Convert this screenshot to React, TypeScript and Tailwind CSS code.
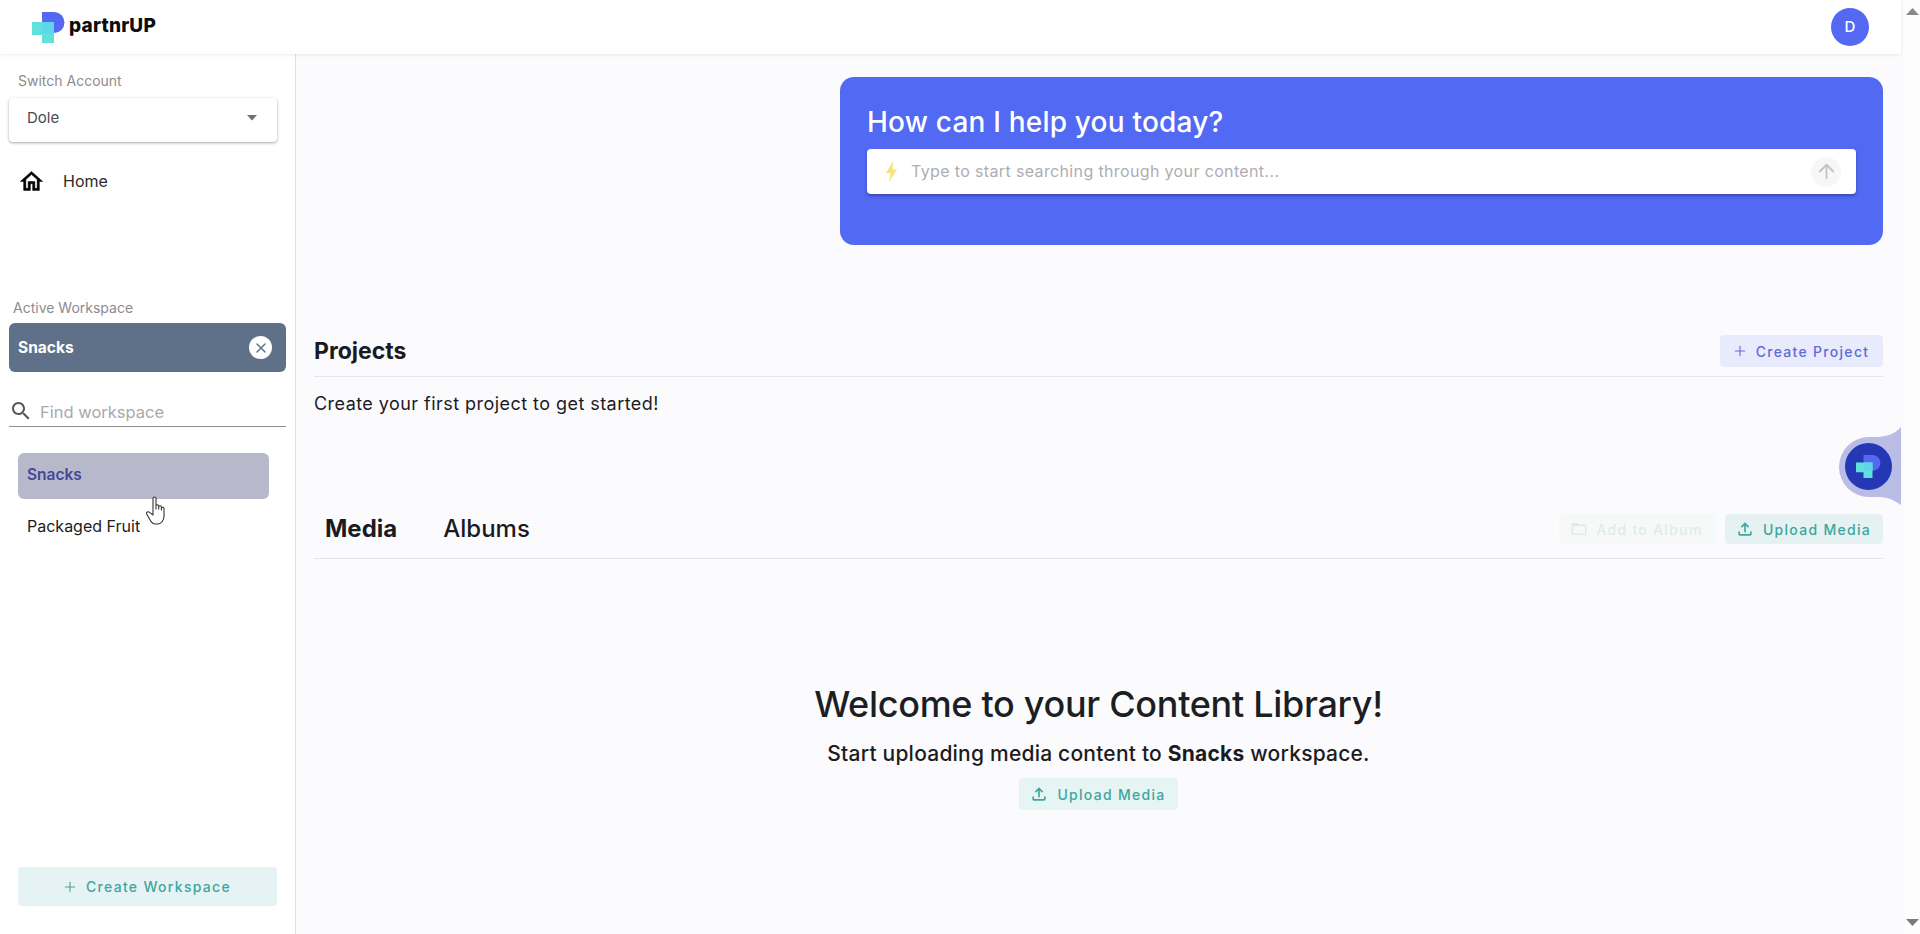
import React from "react";
import { Plus, ArrowUp, X } from "lucide-react";

function Logo({ s = 1 }: { s?: number }) {
  return (
    <svg width={33 * s} height={31 * s} viewBox="0 0 33 31">
      <path d="M10 0h12a10.5 10.5 0 0 1 10.5 10.5A10.5 10.5 0 0 1 22 21H10z" fill="#5468f4" />
      <path d="M10 10h12v21H10V23H0V10z" fill="#62e0da" />
      <path d="M10 10h12v11H10z" fill="#5cd6e8" />
    </svg>
  );
}

function UploadIcon() {
  return (
    <svg width="20" height="20" viewBox="0 0 24 24" fill="currentColor">
      <path d="M18 15v3H6v-3H4v3c0 1.1.9 2 2 2h12c1.1 0 2-.9 2-2v-3h-2zM7 9l1.41 1.41L11 7.83V16h2V7.83l2.59 2.58L17 9l-5-5-5 5z" />
    </svg>
  );
}

function FolderIcon() {
  return (
    <svg width="18" height="18" viewBox="0 0 24 24" fill="currentColor">
      <path d="M20 6h-8l-2-2H4c-1.1 0-1.99.9-1.99 2L2 18c0 1.1.9 2 2 2h16c1.1 0 2-.9 2-2V8c0-1.1-.9-2-2-2zm0 12H4V8h16v10z" />
    </svg>
  );
}

function ActionBtn({ icon, label, cls, w }: { icon: React.ReactNode; label: string; cls: string; w: string }) {
  return (
    <div className={`flex items-center justify-center gap-[8px] rounded-[4px] pr-[2px] text-[14px] font-medium tracking-[1.3px] ${cls} ${w}`}>
      {icon}
      <span>{label}</span>
    </div>
  );
}

export default function App() {
  return (
    <div className="relative h-[934px] w-[1920px] overflow-hidden bg-[#fbfbfe] text-[#1b1b1f] font-['Inter',sans-serif]">
      <header className="relative z-10 flex h-[54px] w-[1901px] items-center justify-between bg-white pl-[32px] pr-[32px] shadow-[0_1px_3px_rgba(0,0,0,0.08)]">
        <div className="flex items-center gap-[4px]">
          <Logo />
          <span className="-mt-[2px] text-[19px] font-extrabold tracking-[0.2px] text-[#0b0b10]">partnrUP</span>
        </div>
        <div className="flex h-[38px] w-[38px] items-center justify-center rounded-full bg-[#5468f4] text-[15px] font-medium text-white">D</div>
      </header>

      <div className="flex h-[880px] w-[1905px]">
        <aside className="flex h-full w-[296px] shrink-0 flex-col border-r border-[#dedfe3] bg-white">
          <div className="pl-[18px] pt-[19px] text-[14px] leading-[16px] text-[#8c8c90]">Switch Account</div>
          <div className="ml-[9px] mt-[9px] flex h-[44px] w-[268px] items-center justify-between rounded-[4px] bg-white pb-[4px] pl-[18px] pr-[20px] text-[15px] text-[#4a4a4e] shadow-[0_1px_3px_rgba(0,0,0,0.35)]">
            <span>Dole</span>
            <svg width="10" height="6" viewBox="0 0 10 6"><path d="M0 0h10L5 5.5z" fill="#6f6f73" /></svg>
          </div>
          <div className="mt-[24px] flex h-[30px] items-center pl-[18px] text-[16px] text-[#2a2a2e]">
            <svg width="27" height="27" viewBox="0 0 24 24" fill="#000" stroke="#000" strokeWidth="0.4">
              <path d="M12 5.69l5 4.5V18h-2v-6H9v6H7v-7.81l5-4.5M12 3L2 12h3v8h6v-6h2v6h6v-8h3L12 3z" />
            </svg>
            <span className="ml-[18px]">Home</span>
          </div>
          <div className="mt-[104px] pl-[13px] text-[14px] leading-[16px] text-[#8c8c90]">Active Workspace</div>
          <div className="ml-[9px] mt-[7px] flex h-[49px] w-[277px] items-center justify-between rounded-[6px] bg-[#5f7189] pl-[9px] pr-[14px]">
            <span className="mt-[1px] text-[15.5px] font-bold text-white">Snacks</span>
            <span className="flex h-[23px] w-[23px] items-center justify-center rounded-full bg-white">
              <X size={16} strokeWidth={2.2} className="text-[#5f7189]" />
            </span>
          </div>
          <div className="ml-[9px] mt-[26px] flex h-[29px] w-[277px] items-center border-b border-[#8f8f93] text-[16.5px] text-[#a9a9ad]">
            <svg width="24" height="24" viewBox="0 0 24 24" fill="#55555a" className="-mt-[3px]">
              <path d="M15.5 14h-.79l-.28-.27C15.41 12.59 16 11.11 16 9.5 16 5.91 13.09 3 9.5 3S3 5.91 3 9.5 5.91 16 9.5 16c1.61 0 3.09-.59 4.23-1.57l.27.28v.79l5 4.99L20.49 19l-4.99-5zm-6 0C7.01 14 5 11.99 5 9.5S7.01 5 9.5 5 14 7.01 14 9.5 11.99 14 9.5 14z" />
            </svg>
            <span className="ml-[7px]">Find workspace</span>
          </div>
          <div className="ml-[18px] mt-[26px] flex h-[46px] w-[251px] items-center rounded-[6px] bg-[#b7b9ca] pb-[2px] pl-[9px] text-[15.5px] font-semibold text-[#45479a]">Snacks</div>
          <div className="ml-[27px] mt-[17px] text-[16px] leading-[20px] text-[#1b1b1f]">Packaged Fruit</div>
          <div className="flex-1" />
          <ActionBtn icon={<Plus size={16} strokeWidth={1.6} />} label="Create Workspace" cls="ml-[18px] mb-[28px] text-[#3ea69e] bg-[#e6f3f4]" w="h-[39px] w-[259px] shrink-0" />
        </aside>

        <main className="flex min-w-0 flex-1 flex-col pl-[18px] pr-[22px]">
          <section className="ml-auto mt-[23px] h-[168px] w-[1043px] rounded-[14px] bg-[#5269f3] pl-[27px] pr-[27px] pt-[26px]">
            <h1 className="text-[28px] font-medium leading-[38px] tracking-[0.2px] text-white">How can I help you today?</h1>
            <div className="mt-[8px] flex h-[45px] items-center justify-between rounded-[4px] bg-white pl-[18px] pr-[15px] shadow-[0_2px_3px_rgba(40,40,110,0.5)]">
              <div className="flex items-center gap-[13px] text-[16px] tracking-[0.36px] text-[#aeaeb2]">
                <svg width="13" height="21" viewBox="0 0 13 21" fill="#f8e27a">
                  <path d="M8 0L1 12h4.5L4 21l8-12.5H7.5z" />
                </svg>
                <span className="-mt-[2px]">Type to start searching through your content...</span>
              </div>
              <span className="flex h-[30px] w-[30px] items-center justify-center rounded-full bg-[#f7f7f8]">
                <ArrowUp size={23} strokeWidth={2} className="text-[#c4c4c8]" />
              </span>
            </div>
          </section>

          <div className="mt-[90px] flex h-[42px] items-center justify-between border-b border-[#e6e6ea] pb-[9px]">
            <h2 className="text-[23px] font-bold text-[#1b1b1f]">Projects</h2>
            <ActionBtn icon={<Plus size={16} strokeWidth={1.6} />} label="Create Project" cls="text-[#5f6bd8] bg-[#e8ebfb]" w="h-[32px] w-[163px]" />
          </div>
          <p className="mt-[15px] text-[18px] leading-[24px] tracking-[0.45px] text-[#1b1b1f]">Create your first project to get started!</p>

          <div className="mt-[99px] flex h-[44px] items-center justify-between border-b border-[#e6e6ea] pb-[15px]">
            <div className="flex items-center text-[24px]">
              <span className="ml-[11px] font-bold">Media</span>
              <span className="ml-[46px] font-medium">Albums</span>
            </div>
            <div className="flex items-center gap-[9px]">
              <ActionBtn icon={<FolderIcon />} label="Add to Album" cls="text-[#dfece6] bg-[#f6f9f8]" w="h-[30px] w-[157px]" />
              <ActionBtn icon={<UploadIcon />} label="Upload Media" cls="text-[#3ea69e] bg-[#e5f2f1]" w="h-[30px] w-[158px]" />
            </div>
          </div>

          <div className="mt-[123px] flex flex-col items-center">
            <h3 className="text-[36px] font-medium leading-[44px] tracking-[-0.3px] text-[#1b1f24]">Welcome to your Content Library!</h3>
            <p className="mt-[14px] text-[21px] font-medium leading-[28px] tracking-[0.22px] text-[#1b1b1f]">
              Start uploading media content to <b className="font-bold">Snacks</b> workspace.
            </p>
            <ActionBtn icon={<UploadIcon />} label="Upload Media" cls="mt-[10px] text-[#3ea69e] bg-[#e6f4f3]" w="h-[32px] w-[159px]" />
          </div>
        </main>
      </div>

      {/* native scrollbar */}
      <div className="absolute right-0 top-0 flex h-[934px] w-[15px] flex-col items-center justify-between bg-[#fdfdfe] py-[8px]">
        <svg width="13" height="8" viewBox="0 0 13 8"><path d="M6.5 0L13 7H0z" fill="#8a8a8a" /></svg>
        <svg width="13" height="8" viewBox="0 0 13 8"><path d="M6.5 8L13 1H0z" fill="#7a7a7a" /></svg>
      </div>

      {/* chat widget */}
      <div className="absolute left-[1839px] top-[425px] h-[82px] w-[62px]">
        <svg width="62" height="82" viewBox="0 0 62 82" className="absolute inset-0">
          <path d="M62 2C55 10 45 12 36 12H30A30 30 0 0 0 30 72H40C50 72 56 76 62 80z" fill="#b9bce4" />
        </svg>
        <div className="absolute left-[6px] top-[18px] flex h-[47px] w-[47px] items-center justify-center rounded-full bg-[#2438b5]">
          <Logo s={0.75} />
        </div>
      </div>

      {/* mouse cursor */}
      <svg className="absolute left-[146px] top-[496px]" width="24" height="30" viewBox="0 0 24 30" fill="#fff" stroke="#333" strokeWidth="1.1" strokeLinejoin="round">
        <path d="M7 2.5c0-2 3-2 3 0V13l0-3c0-1.6 2.7-1.6 2.7 0v3-2c0-1.6 2.7-1.6 2.7 0v3-1.5c0-1.6 2.6-1.6 2.6 0V20c0 4-2.5 8-6.5 8h-2c-3 0-4.5-2-6-5l-2.8-5c-.8-1.8 1.6-3 2.8-1.6L7 19z" />
      </svg>
    </div>
  );
}
